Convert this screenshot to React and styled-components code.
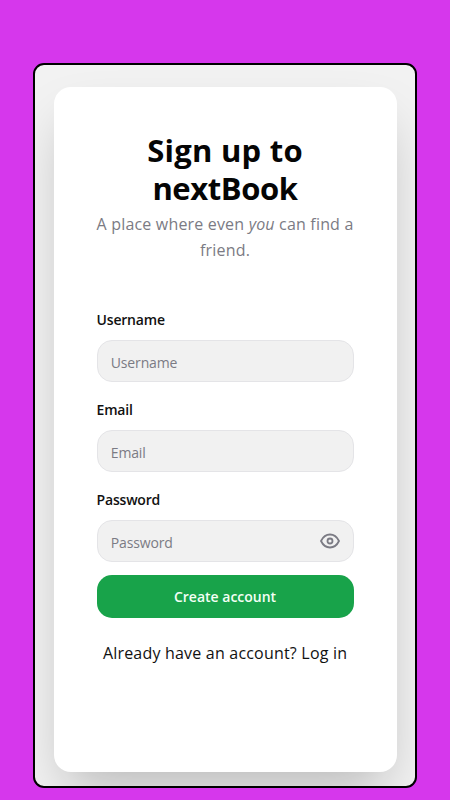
import React, { useState } from 'react';
import styled, { createGlobalStyle } from 'styled-components';

const GlobalStyle = createGlobalStyle`
  * {
    box-sizing: border-box;
  }

  body {
    margin: 0;
    background-color: #d637ec;
    font-family: 'Segoe UI', 'Open Sans', 'Noto Sans', sans-serif;
  }
`;

const fields = [
  { name: 'username', label: 'Username', type: 'text' },
  { name: 'email', label: 'Email', type: 'email' },
  { name: 'password', label: 'Password', type: 'password' },
];

const EyeIcon = () => (
  <svg width="20" height="20" viewBox="0 0 20 20" fill="none" stroke="currentColor" strokeWidth="1.8">
    <path d="M1 10Q4.2 3.5 10 3.5T19 10Q15.8 16.5 10 16.5T1 10Z" strokeLinejoin="round" />
    <circle cx="10" cy="10" r="2.5" />
  </svg>
);

const App = () => {
  const [visible, setVisible] = useState(false);

  return (
    <PageStyled>
      <GlobalStyle />
      <FrameStyled>
        <CardStyled>
          <TitleStyled>
            <TitleLineStyled $spacing="0.25px">Sign up to </TitleLineStyled>
            <TitleLineStyled $spacing="-0.4px">nextBook</TitleLineStyled>
          </TitleStyled>
          <SubtitleStyled>
            A place where even <em>you</em> can find a friend.
          </SubtitleStyled>
          <FormStyled onSubmit={e => e.preventDefault()}>
            {fields.map(({ name, label, type }) => (
              <FieldStyled key={name}>
                <LabelStyled htmlFor={name}>{label}</LabelStyled>
                <InputWrapperStyled>
                  <InputStyled
                    id={name}
                    name={name}
                    type={type === 'password' && visible ? 'text' : type}
                    placeholder={label}
                  />
                  {type === 'password' && (
                    <EyeBtnStyled
                      type="button"
                      aria-label="Toggle password"
                      onClick={() => setVisible(!visible)}
                    >
                      <EyeIcon />
                    </EyeBtnStyled>
                  )}
                </InputWrapperStyled>
              </FieldStyled>
            ))}
            <SubmitBtnStyled type="submit">Create account</SubmitBtnStyled>
          </FormStyled>
          <FooterStyled>
            Already have an account? <LinkStyled href="#login">Log in</LinkStyled>
          </FooterStyled>
        </CardStyled>
      </FrameStyled>
    </PageStyled>
  );
};

export default App;

const PageStyled = styled.main`
  height: 800px;
  padding: 63.4px 33px 12px;
  overflow: hidden;
`;

const FrameStyled = styled.div`
  height: 724.4px;
  padding: 21.6px 18.5px 0 18.6px;
  border: 2px solid #000;
  border-radius: 11px;
  background-color: #f2f2f2;
  overflow: hidden;
`;

const CardStyled = styled.section`
  height: 685px;
  padding: 44px 43px 0;
  border-radius: 17px;
  background-color: #fff;
  box-shadow: 0 27px 54px -13px rgba(0, 0, 0, 0.25);
`;

const TitleStyled = styled.h1`
  margin: 0;
  color: #050505;
  font-size: 31px;
  font-weight: 700;
  line-height: 38.5px;
  text-align: center;
`;

const TitleLineStyled = styled.span`
  display: block;
  letter-spacing: ${({ $spacing }) => $spacing};
`;

const SubtitleStyled = styled.p`
  margin: 4px -6px 0;
  color: #7b7b84;
  font-size: 16px;
  letter-spacing: 0.18px;
  line-height: 25.7px;
  text-align: center;
`;

const FormStyled = styled.form`
  display: flex;
  flex-direction: column;
  margin-top: 48.2px;
`;

const FieldStyled = styled.div`
  display: flex;
  flex-direction: column;
  height: 90px;
`;

const LabelStyled = styled.label`
  height: 28.2px;
  color: #111;
  font-size: 14px;
  font-weight: 600;
  letter-spacing: -0.2px;
  line-height: 15px;
`;

const InputWrapperStyled = styled.div`
  display: flex;
  align-items: center;
  height: 42.5px;
  padding: 0 12.5px 0 13.2px;
  border: 1px solid #e4e4e7;
  border-radius: 15px;
  background-color: #f1f1f1;
`;

const InputStyled = styled.input`
  flex: 1;
  min-width: 0;
  padding: 2px 0 0;
  border: 0;
  outline: 0;
  background: none;
  font-family: inherit;
  font-size: 14px;
  letter-spacing: -0.15px;

  &::placeholder {
    color: #7b7b84;
    opacity: 1;
  }
`;

const EyeBtnStyled = styled.button`
  display: flex;
  padding: 0;
  border: 0;
  background: none;
  color: #7b7b84;
`;

const SubmitBtnStyled = styled.button`
  height: 43px;
  margin-top: -7px;
  padding: 0;
  border: 0;
  border-radius: 15px;
  background-color: #18a34a;
  color: #f3fff5;
  font-family: inherit;
  font-size: 14px;
  font-weight: 600;
`;

const FooterStyled = styled.p`
  margin: 22px -10px 0;
  color: #111;
  font-size: 16px;
  letter-spacing: 0.2px;
  line-height: 26px;
  text-align: center;
  white-space: nowrap;
`;

const LinkStyled = styled.a`
  color: inherit;
  text-decoration: none;
`;
